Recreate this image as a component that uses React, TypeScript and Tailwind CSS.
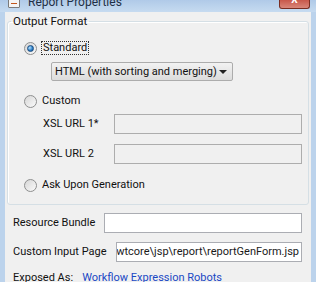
import React from 'react'

const FONT = { fontFamily: 'Roboto, "Noto Sans", Arial, sans-serif' }

function Radio({ checked }: { checked?: boolean }) {
  return (
    <span className="flex h-[13px] w-[13px] shrink-0 items-center justify-center rounded-full border border-[#8e8f8f] bg-gradient-to-br from-[#d6d6d6] to-[#fbfbfb]">
      {checked && (
        <span className="h-[7px] w-[7px] rounded-full border border-[#1a4c80] bg-[radial-gradient(circle_at_35%_35%,#b5e2ff,#2a7cc4_60%,#164f8c)]" />
      )}
    </span>
  )
}

function TextBox({ enabled, children }: { enabled?: boolean; children?: React.ReactNode }) {
  return (
    <div
      className={`flex h-[20px] min-w-0 flex-1 items-center justify-end overflow-hidden whitespace-nowrap border px-[2px] text-[#1a1a1a] ${
        enabled ? 'border-[#abadb3] bg-white' : 'border-[#adadad] bg-[#f0f0f0]'
      }`}
    >
      {children}
    </div>
  )
}

export default function App() {
  return (
    <div
      className="flex h-[282px] w-[316px] flex-col overflow-hidden bg-[#bcd3ec] text-[11px] leading-[14px] text-[#111]"
      style={FONT}
    >
      {/* title bar, scrolled off the top */}
      <div className="relative h-[12px] shrink-0 bg-gradient-to-b from-[#b0cae8] to-[#c6dbf0]">
        <div className="-mt-[5px] flex items-center gap-[8px] pl-[8px]">
          <span className="flex h-[11px] w-[12px] items-center justify-center rounded-[1px] border border-[#7a7a7a] bg-[#f4f4f4]">
            <span className="h-[3px] w-[6px] border-b border-[#c2561c]" />
          </span>
          <span className="text-[12px] text-[#1e2f45]">Report Properties</span>
        </div>
        <div className="absolute right-[6px] top-0 flex h-[9px] w-[31px] items-start justify-center overflow-hidden rounded-b-[3px] border border-t-0 border-[#7a2d22] bg-gradient-to-b from-[#c8574a] to-[#d9867a]">
          <span className="-mt-[6px] text-[10px] font-bold leading-[12px] text-white">X</span>
        </div>
      </div>

      {/* client area */}
      <div className="mx-[5px] flex flex-1 flex-col bg-[#f0f0f0] px-[2px]">
        <fieldset className="mt-[2px] rounded-[3px] border border-[#d5dfe5] pb-[9px] pl-[16px] pr-[6px] shadow-[inset_1px_1px_0_#fff]">
          <legend className="-ml-[13px] px-[2px] text-[11.5px]">Output Format</legend>

          <div className="mt-[10px] flex h-[20px] items-center gap-[4px]">
            <Radio checked />
            <span className="border border-dotted border-[#333] px-[1px] leading-[12px]">Standard</span>
          </div>

          <div className="ml-[27px] mt-[4px] flex h-[19px] w-[182px] items-center justify-between whitespace-nowrap rounded-[2px] border border-[#acacac] bg-gradient-to-b from-[#f2f2f2] to-[#dcdcdc] pl-[3px] pr-[5px]">
            <span>HTML (with sorting and merging)</span>
            <span className="h-0 w-0 border-x-[4px] border-t-[4px] border-x-transparent border-t-[#222]" />
          </div>

          <div className="mt-[10px] flex h-[20px] items-center gap-[5px]">
            <Radio />
            <span>Custom</span>
          </div>

          <div className="mt-[3px] flex items-center">
            <span className="w-[90px] shrink-0 pl-[19px]">XSL URL 1*</span>
            <TextBox />
          </div>
          <div className="mt-[10px] flex items-center">
            <span className="w-[90px] shrink-0 pl-[19px]">XSL URL 2</span>
            <TextBox />
          </div>

          <div className="mt-[11px] flex h-[20px] items-center gap-[5px]">
            <Radio />
            <span>Ask Upon Generation</span>
          </div>
        </fieldset>

        <div className="mt-[8px] flex items-center pl-[6px] pr-[7px]">
          <span className="w-[91px] shrink-0">Resource Bundle</span>
          <TextBox enabled />
        </div>
        <div className="mt-[9px] flex items-center pl-[6px] pr-[7px]">
          <span className="w-[103px] shrink-0">Custom Input Page</span>
          <TextBox enabled>{'\\codebase\\wtcore\\jsp\\report\\reportGenForm.jsp'}</TextBox>
        </div>
        <div className="mt-[9px] flex items-center gap-[9px] pl-[6px]">
          <span>Exposed As:</span>
          <span className="text-[#1a48c4]">Workflow Expression Robots</span>
        </div>
      </div>
    </div>
  )
}
